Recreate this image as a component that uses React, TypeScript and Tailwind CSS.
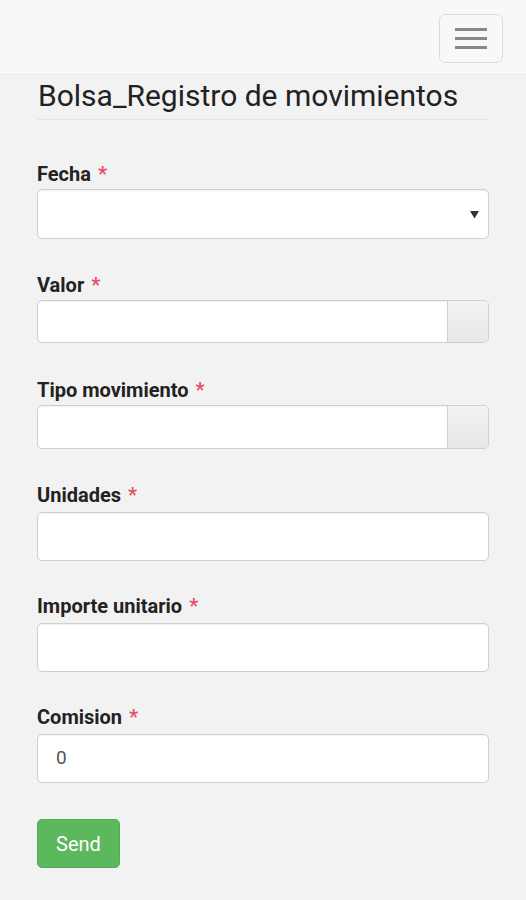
const FIELDS = [
  { label: 'Fecha', mt: 'mt-[42px]', gap: 'mt-[3px]', h: 'h-[50px]', kind: 'select' },
  { label: 'Valor', mt: 'mt-[34px]', gap: 'mt-[3px]', h: 'h-[43px]', kind: 'addon' },
  { label: 'Tipo movimiento', mt: 'mt-[35px]', gap: 'mt-[3px]', h: 'h-[44px]', kind: 'addon' },
  { label: 'Unidades', mt: 'mt-[34px]', gap: 'mt-[5px]', h: 'h-[49px]', kind: 'text' },
  { label: 'Importe unitario', mt: 'mt-[33px]', gap: 'mt-[5px]', h: 'h-[49px]', kind: 'text' },
  { label: 'Comision', mt: 'mt-[33px]', gap: 'mt-[5px]', h: 'h-[49px]', kind: 'text', value: '0' },
]

function Field({ f }: { f: (typeof FIELDS)[number] }) {
  return (
    <div className={f.mt}>
      <label className="block h-6 leading-6 text-[20px] font-bold text-[#222]">
        {f.label}
        <span className="ml-[7px] text-[#e6506a]">*</span>
      </label>
      {f.kind === 'addon' ? (
        <div className={`${f.gap} ${f.h} flex rounded-[5px] border border-[#cfcfcf] bg-white shadow-[inset_0_1px_1px_rgba(0,0,0,0.06)] overflow-hidden`}>
          <div className="flex-1" />
          <div className="w-[41px] border-l border-[#cfcfcf] bg-gradient-to-b from-[#f3f3f3] to-[#e8e8e8]" />
        </div>
      ) : (
        <div className={`${f.gap} ${f.h} flex items-center rounded-[5px] border border-[#cfcfcf] bg-white shadow-[inset_0_1px_1px_rgba(0,0,0,0.06)] pl-[18px] pr-[9px]`}>
          <span className="flex-1 text-[19px] text-[#555]">{f.value ?? ''}</span>
          {f.kind === 'select' && (
            <svg width="9" height="8" viewBox="0 0 9 8" className="mt-[2px]">
              <path d="M0 0 H9 L4.5 7.5 Z" fill="#333" />
            </svg>
          )}
        </div>
      )}
    </div>
  )
}

export default function App() {
  return (
    <div className="min-h-[900px] bg-[#f2f2f2] font-['Roboto',sans-serif]">
      {/* Navbar */}
      <nav className="h-[75px] bg-[#f8f8f8] border-b border-[#e8e8e8] flex justify-end items-start pr-[23px] pt-[14px]">
        <button className="w-[64px] h-[49px] rounded-[6px] border border-[#dcdcdc] flex flex-col items-center justify-center gap-[6px]">
          <span className="block w-[32px] h-[3px] bg-[#888]" />
          <span className="block w-[32px] h-[3px] bg-[#888]" />
          <span className="block w-[32px] h-[3px] bg-[#888]" />
        </button>
      </nav>

      <div className="px-[37px]">
        <h1 className="mt-[5px] pb-[7px] border-b border-[#e3e3e3] text-[30px] leading-8 font-normal text-[#222] pl-px">
          Bolsa_Registro de movimientos
        </h1>

        {FIELDS.map(f => (
          <Field key={f.label} f={f} />
        ))}

        <button className="mt-[36px] w-[83px] h-[49px] rounded-[5px] bg-[#5cb85c] border border-[#4cae4c] text-white text-[20px]">
          Send
        </button>
      </div>
    </div>
  )
}
